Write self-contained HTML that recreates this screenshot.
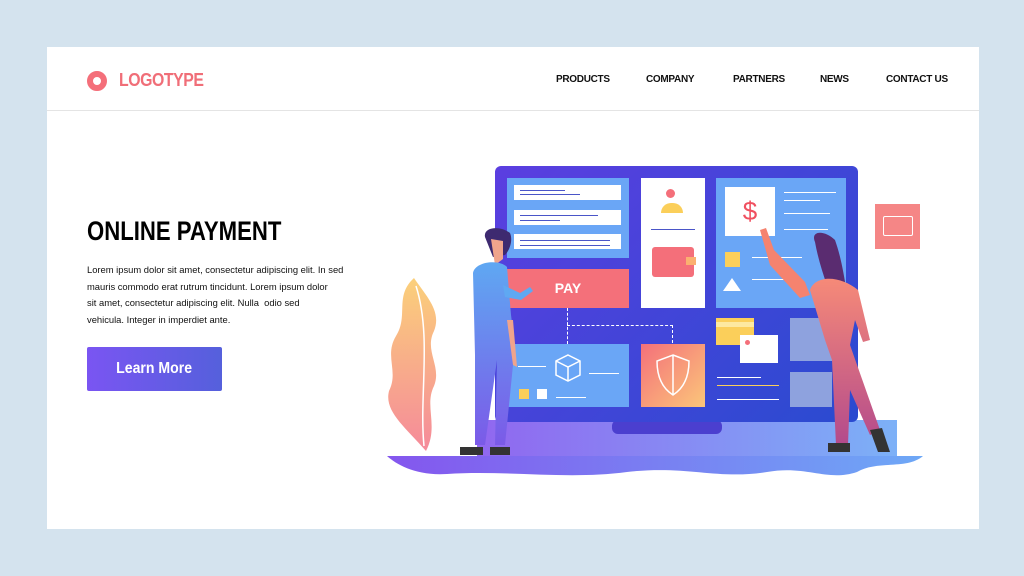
<!DOCTYPE html>
<html><head><meta charset="utf-8"><style>
*{margin:0;padding:0;box-sizing:border-box}
body{width:1024px;height:576px;background:#d4e3ee;position:relative;overflow:hidden;font-family:"Liberation Sans",sans-serif}
.card{position:absolute;left:47px;top:47px;width:932px;height:482px;background:#fff}
.a{position:absolute}
.nav{position:absolute;top:74px;font-size:10px;font-weight:bold;color:#111;letter-spacing:-0.3px}
.ln{position:absolute;height:2px;background:#4a55c8}
.wl{position:absolute;height:2px;background:#fff}
.p{position:absolute;left:87px;font-size:9.4px;color:#111;white-space:nowrap;transform:scaleX(1);transform-origin:left}
</style></head><body>
<div class="card"></div>
<div class="a" style="left:47px;top:110px;width:932px;height:1px;background:#e4e4e4"></div>
<div class="a" style="left:87px;top:71px;width:20px;height:20px;border-radius:50%;border:6px solid #f46f7a"></div>
<div class="a" style="left:119px;top:70px;font-size:18px;font-weight:bold;color:#f06e78;letter-spacing:-0.5px;transform:scaleX(.88);transform-origin:left">LOGOTYPE</div>
<div class="nav" style="left:556px">PRODUCTS</div>
<div class="nav" style="left:646px">COMPANY</div>
<div class="nav" style="left:733px">PARTNERS</div>
<div class="nav" style="left:820px">NEWS</div>
<div class="nav" style="left:886px">CONTACT US</div>
<div class="a" style="left:87px;top:216px;font-size:27px;font-weight:bold;color:#000;transform:scaleX(.82);transform-origin:left;white-space:nowrap">ONLINE PAYMENT</div>
<div class="p" style="top:264px">Lorem ipsum dolor sit amet, consectetur adipiscing elit. In sed</div>
<div class="p" style="top:281px">mauris commodo erat rutrum tincidunt. Lorem ipsum dolor</div>
<div class="p" style="top:297px">sit amet, consectetur adipiscing elit. Nulla&nbsp; odio sed</div>
<div class="p" style="top:314px">vehicula. Integer in imperdiet ante.</div>
<div class="a" style="left:87px;top:347px;width:135px;height:44px;border-radius:2px;background:linear-gradient(90deg,#7a55f2,#5560dc);color:#fff;font-weight:bold;font-size:16px;text-align:center;line-height:44px"><span style="display:inline-block;transform:scaleX(.88)">Learn More</span></div>

<svg class="a" style="left:384px;top:276px" width="60" height="180"><defs><linearGradient id="pg" x1="0" y1="0" x2="0" y2="1"><stop offset="0" stop-color="#fbd07a"/><stop offset="1" stop-color="#f58a9a"/></linearGradient></defs><path d="M30 2 C10 20 25 40 12 60 C0 80 15 95 5 115 C0 135 20 150 42 175 C55 150 40 130 50 110 C58 90 40 75 50 55 C58 35 42 20 30 2Z" fill="url(#pg)"/><path d="M40 170 C35 120 48 60 32 10" stroke="#fff" stroke-width="1.5" fill="none"/></svg>
<svg class="a" style="left:387px;top:420px" width="540" height="62"><defs><linearGradient id="bg" x1="0" x2="1"><stop offset="0" stop-color="#8456ee"/><stop offset="1" stop-color="#6ea8f6"/></linearGradient></defs><path d="M0 36 L536 36 C520 50 490 40 470 52 C440 62 420 45 380 52 C330 60 300 45 240 52 C180 60 120 50 60 54 C30 56 10 45 0 36Z" fill="url(#bg)"/><path d="M90 0 L510 0 L510 36 L90 36Z" fill="url(#bg)" opacity=".9"/><rect x="225" y="0" width="110" height="14" rx="6" fill="#4b3fcf"/></svg>
<div class="a" style="left:495px;top:166px;width:363px;height:256px;border-radius:6px;background:linear-gradient(135deg,#5b3ee0,#2a4bd0)"></div>
<div class="a" style="left:507px;top:178px;width:122px;height:80px;background:#6aa6f6"></div>
<div class="a" style="left:514px;top:185px;width:107px;height:15px;background:#fff"></div>
<div class="a" style="left:514px;top:210px;width:107px;height:15px;background:#fff"></div>
<div class="a" style="left:514px;top:234px;width:107px;height:15px;background:#fff"></div>
<div class="ln" style="left:520px;top:190px;width:45px;height:1px"></div><div class="ln" style="left:520px;top:194px;width:60px;height:1px"></div>
<div class="ln" style="left:520px;top:215px;width:78px;height:1px"></div><div class="ln" style="left:520px;top:220px;width:40px;height:1px"></div>
<div class="ln" style="left:520px;top:240px;width:90px;height:1px"></div><div class="ln" style="left:520px;top:245px;width:90px;height:1px"></div>
<div class="a" style="left:507px;top:269px;width:122px;height:39px;background:#f4707a;color:#fff;font-weight:bold;font-size:14px;text-align:center;line-height:39px">PAY</div>
<div class="a" style="left:641px;top:178px;width:64px;height:130px;background:#fff"></div>
<div class="a" style="left:666px;top:189px;width:9px;height:9px;border-radius:50%;background:#f46f7a"></div>
<div class="a" style="left:661px;top:203px;width:22px;height:10px;border-radius:10px 10px 0 0;background:#fbcf5a"></div>
<div class="ln" style="left:651px;top:229px;width:44px;height:1px"></div>
<div class="a" style="left:652px;top:247px;width:42px;height:30px;border-radius:3px;background:#f46f7a"></div>
<div class="a" style="left:686px;top:257px;width:10px;height:8px;background:#fbb070"></div>
<div class="a" style="left:716px;top:178px;width:130px;height:130px;background:#6aa6f6"></div>
<div class="a" style="left:725px;top:187px;width:50px;height:49px;background:#fff;color:#f05060;font-size:26px;text-align:center;line-height:49px">$</div>
<div class="wl" style="left:784px;top:192px;width:52px;height:1px"></div><div class="wl" style="left:784px;top:200px;width:36px;height:1px"></div><div class="wl" style="left:784px;top:213px;width:46px;height:1px"></div><div class="wl" style="left:784px;top:229px;width:44px;height:1px"></div>
<div class="a" style="left:725px;top:252px;width:15px;height:15px;background:#fbcf5a"></div>
<div class="a" style="left:723px;top:278px;width:0;height:0;border-left:9px solid transparent;border-right:9px solid transparent;border-bottom:13px solid #fff"></div>
<div class="wl" style="left:752px;top:257px;width:50px;height:1px"></div><div class="wl" style="left:752px;top:279px;width:35px;height:1px"></div>
<div class="a" style="left:567px;top:308px;width:0;height:36px;border-left:1px dashed #fff"></div>
<div class="a" style="left:567px;top:325px;width:106px;height:0;border-top:1px dashed #fff"></div>
<div class="a" style="left:672px;top:325px;width:0;height:18px;border-left:1px dashed #fff"></div>
<div class="a" style="left:507px;top:344px;width:122px;height:63px;background:#6aa6f6"></div>
<svg class="a" style="left:553px;top:352px" width="30" height="32"><path d="M15 3 L27 9 L27 23 L15 29 L3 23 L3 9Z M3 9 L15 15 L27 9 M15 15 L15 29" fill="none" stroke="#fff" stroke-width="1.5"/></svg>
<div class="a" style="left:519px;top:389px;width:10px;height:10px;background:#fbcf5a"></div><div class="a" style="left:537px;top:389px;width:10px;height:10px;background:#fff"></div>
<div class="wl" style="left:518px;top:366px;width:28px;height:1px"></div><div class="wl" style="left:589px;top:373px;width:30px;height:1px"></div><div class="wl" style="left:556px;top:397px;width:30px;height:1px"></div>
<div class="a" style="left:641px;top:344px;width:64px;height:63px;background:linear-gradient(135deg,#f4707a,#fbc67a)"></div>
<svg class="a" style="left:654px;top:352px" width="38" height="46"><path d="M19 3 L35 9 C35 25 30 36 19 43 C8 36 3 25 3 9Z M19 3 L19 43" fill="none" stroke="#fff" stroke-width="1.5"/></svg>
<div class="a" style="left:716px;top:318px;width:38px;height:27px;background:#fbcf5a"></div><div class="a" style="left:716px;top:322px;width:38px;height:5px;background:#fde9a0"></div>
<div class="a" style="left:740px;top:335px;width:38px;height:28px;background:#fff"></div>
<div class="a" style="left:745px;top:340px;width:5px;height:5px;border-radius:50%;background:#f46f7a"></div>
<div class="wl" style="left:717px;top:377px;width:44px;height:1px"></div><div class="a" style="left:717px;top:385px;width:62px;height:1px;background:#fbcf5a"></div><div class="wl" style="left:717px;top:399px;width:62px;height:1px"></div>
<div class="a" style="left:790px;top:318px;width:42px;height:43px;background:#8ea2de"></div>
<div class="a" style="left:790px;top:372px;width:42px;height:35px;background:#8ea2de"></div>
<div class="a" style="left:875px;top:204px;width:45px;height:45px;background:#f58686"></div>
<div class="a" style="left:883px;top:216px;width:30px;height:20px;border:1.5px solid #fff;border-radius:2px"></div>
<svg class="a" style="left:455px;top:225px" width="80" height="235"><defs><linearGradient id="mg" x1="0" y1="0" x2="0" y2="1"><stop offset="0" stop-color="#5fa8f2"/><stop offset="1" stop-color="#7b5ae8"/></linearGradient></defs><path d="M30 12 C28 2 45 0 55 8 C58 15 55 25 50 30 L38 32Z" fill="#3e2a70"/><path d="M36 14 L48 16 L48 34 L40 40Z" fill="#f0a48c"/><path d="M18 48 C20 36 45 34 52 42 L56 90 L60 120 L50 220 L40 220 L42 135 L30 220 L20 220 L20 130 Z" fill="url(#mg)"/><path d="M48 60 L65 68 L75 62 L78 66 L66 75 L50 72Z" fill="#5fa8f2"/><path d="M52 95 L58 140 L62 142 L58 95Z" fill="#f0a48c"/><path d="M5 222 L28 222 L28 230 L5 230Z M35 222 L55 222 L55 230 L35 230Z" fill="#333"/></svg>
<svg class="a" style="left:760px;top:220px" width="140" height="240"><defs><linearGradient id="wg" x1="0" y1="0" x2="0" y2="1"><stop offset="0" stop-color="#f68a78"/><stop offset="1" stop-color="#b34a8c"/></linearGradient></defs><path d="M0 10 L6 8 L14 30 L45 62 L50 75 L40 78 L10 45Z" fill="#f5836f"/><path d="M55 22 C50 10 65 10 75 20 C82 40 85 60 90 95 L75 95 C70 70 60 50 55 22Z" fill="#5a2c70"/><path d="M50 70 C55 55 80 55 98 70 L110 120 L103 122 L95 100 L90 125 L120 210 L110 215 L90 170 L88 225 L76 225 L72 140 L65 120Z" fill="url(#wg)"/><path d="M68 223 L90 223 L90 232 L68 232Z M110 210 L122 208 L130 232 L118 232Z" fill="#333"/></svg>
</body></html>
